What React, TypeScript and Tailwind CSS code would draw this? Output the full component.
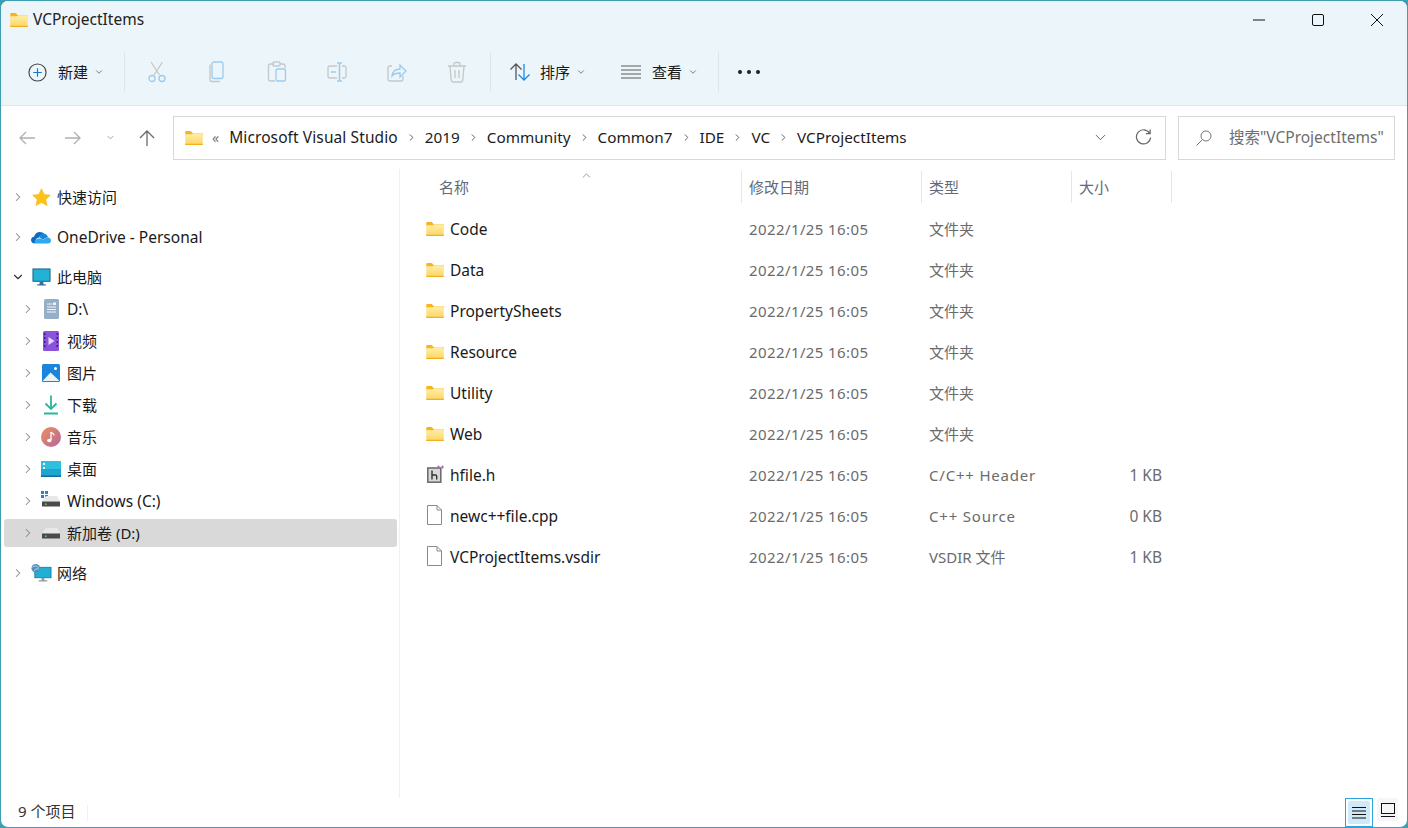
import { useId } from 'react';
import { ChevronDown, ChevronRight, ChevronUp } from 'lucide-react';

function Folder({ className = 'w-[18px] h-[14px]' }: { className?: string }) {
  const id = useId();
  return (
    <svg viewBox="0 0 20 16" className={className}>
      <defs>
        <linearGradient id={id} x1="0" y1="0" x2="0" y2="1">
          <stop offset="0" stopColor="#ffeeaa" />
          <stop offset="1" stopColor="#fcd562" />
        </linearGradient>
      </defs>
      <path d="M0 1.2C0 .5.5 0 1.2 0h5L8.5 2.2H20V5H0z" fill="#f6b51f" />
      <path d="M0 3.6h7.4L9 2.6h11V16H0z" fill={`url(#${id})`} />
      <rect x="0" y="14.6" width="20" height="1.4" fill="#efb021" />
    </svg>
  );
}

function Doc() {
  return (
    <svg viewBox="0 0 15 20" className="w-[15px] h-[20px] mb-[3px] mr-[1px]" fill="#fff" stroke="#8a8a8a">
      <path d="M.5.5h9.5l4.500 4.500v14.500H.5z" />
      <path d="M10 .5V5h4.500" fill="none" />
    </svg>
  );
}

function HeaderFile() {
  return (
    <svg viewBox="0 0 17 18" className="w-[17px] h-[18px] mb-[3px]">
      <rect x=".8" y="3" width="13" height="14.200" fill="#d9d9d9" stroke="#6e6e6e" strokeWidth="1.600" />
      <path d="M5 5.500v9M5 10h3.500q1.200 0 1.200 1.200v3.300" fill="none" stroke="#333" strokeWidth="1.400" />
      <path d="M10 2h3M11.500.5v3M14 2h3M15.500.5v3" stroke="#a866b0" strokeWidth="1" />
    </svg>
  );
}

const blue = '#9ccbef';
const grey = '#c3c8cb';

function ToolIcon({ children }: { children: React.ReactNode }) {
  return (
    <div className="w-[60px] flex justify-center">
      <svg viewBox="0 0 20 22" className="w-[20px] h-[22px]" fill="none" strokeWidth="1.3">
        {children}
      </svg>
    </div>
  );
}

function Drive({ win = false }: { win?: boolean }) {
  return (
    <svg viewBox="0 0 20 20" className="w-[20px] h-[20px]">
      {win && (
        <g fill="#1f86d6">
          <rect x="0" y="0" width="3" height="3" />
          <rect x="4" y="0" width="3" height="3" />
          <rect x="0" y="4" width="3" height="3" />
          <rect x="4" y="4" width="3" height="3" />
        </g>
      )}
      <path d="M5 5H16L19 10.500H1z" fill="#e8e8e8" />
      <rect x="1" y="10.500" width="18" height="5" fill="#4a4a4a" />
      <rect x="4" y="12.500" width="1.600" height="1.400" fill="#5fe05a" />
    </svg>
  );
}

const navIcons: Record<string, React.ReactNode> = {
  star: (
    <svg viewBox="0 0 20 20" className="w-[19px] h-[19px]">
      <path d="M10 .8l2.8 6 6.5.8-4.8 4.4 1.3 6.5L10 15.2l-5.800 3.300 1.300-6.500L.7 7.600l6.500-.8z" fill="#fcc419" stroke="#f4ae0c" strokeWidth=".6" />
    </svg>
  ),
  cloud: (
    <svg viewBox="0 0 20 14" className="w-[20px] h-[14px]">
      <path d="M3.600 13.500C1.600 13.500 0 12 0 10.100c0-1.800 1.300-3.200 3.100-3.400C3.800 3.900 6.100 2 8.800 2c1.900 0 3.500.9 4.600 2.300-1-.2-4.200.1-5.400 3.200-2 .2-3.800 1.800-3.600 4.200z" fill="#0c6cc4" />
      <path d="M8 7C9.500 3.500 13 2.500 15 4.500c1.200.8 1.700 1.500 2 2.900-1.100 0-3.400.3-5 2.700-1.100-.8-2.500-2.400-4-3.100z" fill="#1488dd" />
      <path d="M17 7.400c1.700.1 3 1.400 3 3 0 1.700-1.300 3.100-3 3.100H5c-1.400 0-1.800-2.600-.5-3.600 1.700-1.300 3.700-1.900 5.500-1.100 1 .4 1.500 1 2 1.500 1.300-1.900 3-2.900 5-2.900z" fill="#30a8ee" />
    </svg>
  ),
  pc: (
    <svg viewBox="0 0 20 20" className="w-[19px] h-[19px]">
      <rect x="1" y="1" width="18" height="13" fill="#22b2d6" stroke="#1a5f85" strokeWidth="1" />
      <path d="M8 14.500h4v2.500H8zM5.500 17h9v1.500h-9z" fill="#2f7396" />
    </svg>
  ),
  doc: (
    <svg viewBox="0 0 15 20" className="w-[15px] h-[20px]">
      <rect width="15" height="20" rx="1.500" fill="#96aec6" />
      <path d="M3 5h5M3 8h9M3 10.500h9M3 13h9" stroke="#f3f6f9" strokeWidth="1" />
      <rect x="9" y="3.500" width="3" height="2.500" fill="#f3f6f9" />
    </svg>
  ),
  video: (
    <svg viewBox="0 0 16 20" className="w-[16px] h-[20px]">
      <rect width="16" height="20" rx="1.500" fill="#8b53dc" />
      <path d="M1 2h1.500v2H1zM1 6h1.500v2H1zM1 10h1.500v2H1zM1 14h1.500v2H1zM13.500 2H15v2h-1.500zM13.500 6H15v2h-1.500zM13.500 10H15v2h-1.500zM13.500 14H15v2h-1.500z" fill="#3f2080" />
      <path d="M5.500 6l6 4-6 4z" fill="#e6d8fb" />
    </svg>
  ),
  image: (
    <svg viewBox="0 0 18 18" className="w-[18px] h-[18px]">
      <rect width="18" height="18" rx="1.500" fill="#1b84dd" />
      <circle cx="13.500" cy="4.500" r="1.500" fill="#fff" />
      <path d="M1 16.500L8.500 8.500 17 16.500V17H1z" fill="#e8f3fb" />
    </svg>
  ),
  down: (
    <svg viewBox="0 0 14 20" className="w-[14px] h-[20px]" fill="none" stroke="#28b89a" strokeWidth="1.800">
      <path d="M7 .5v13M1.500 8.500L7 14l5.500-5.500M0 18.500h14" />
    </svg>
  ),
  music: (
    <svg viewBox="0 0 20 20" className="w-[20px] h-[20px]">
      <defs>
        <linearGradient id="music-g" x1="0" y1="0" x2="1" y2="1">
          <stop offset="0" stopColor="#f0905a" />
          <stop offset="1" stopColor="#b4669f" />
        </linearGradient>
      </defs>
      <circle cx="10" cy="10" r="10" fill="url(#music-g)" />
      <path d="M10 5v8" stroke="#fff" strokeWidth="1.300" />
      <path d="M10 5c1 1.500 3 1.500 3 3.500" fill="none" stroke="#fff" strokeWidth="1.300" />
      <ellipse cx="8.300" cy="13.500" rx="2.200" ry="1.800" fill="#fff" />
    </svg>
  ),
  desktop: (
    <svg viewBox="0 0 20 16" className="w-[20px] h-[16px]">
      <rect width="20" height="16" rx="1" fill="#1ea5cd" />
      <rect width="20" height="8" rx="1" fill="#2ec0df" />
      <rect x="2" y="2" width="2" height="2" fill="#fff" />
      <rect x="2" y="6" width="2" height="2" fill="#fff" />
      <rect x="0" y="14.500" width="20" height="1.500" fill="#0f6c9c" />
    </svg>
  ),
  win: <Drive win />,
  drive: <Drive />,
  net: (
    <svg viewBox="0 0 22 20" className="w-[21px] h-[20px]">
      <rect x="4" y="4" width="17" height="11" fill="#22afd4" stroke="#1a6f95" strokeWidth=".8" />
      <path d="M11 15h3v2.500h-3zM8 17.500h9V19H8z" fill="#8d9aa3" />
      <circle cx="5" cy="5" r="4.500" fill="#4f8fb5" />
      <path d="M1.500 4c2-2 5-2 6.500 1M3 8c1-2 3-3 5-2" fill="none" stroke="#cfe3ee" strokeWidth=".9" />
    </svg>
  ),
};

const navItems = [
  { label: '快速访问', icon: 'star', level: 0, gap: 'mt-0' },
  { label: 'OneDrive - Personal', icon: 'cloud', level: 0, gap: 'mt-[12px]', latin: true },
  { label: '此电脑', icon: 'pc', level: 0, gap: 'mt-[12px]', open: true },
  { label: 'D:\\', icon: 'doc', level: 1, gap: 'mt-[4px]', latin: true },
  { label: '视频', icon: 'video', level: 1, gap: 'mt-[4px]' },
  { label: '图片', icon: 'image', level: 1, gap: 'mt-[4px]' },
  { label: '下载', icon: 'down', level: 1, gap: 'mt-[4px]' },
  { label: '音乐', icon: 'music', level: 1, gap: 'mt-[4px]' },
  { label: '桌面', icon: 'desktop', level: 1, gap: 'mt-[4px]' },
  { label: 'Windows (C:)', icon: 'win', level: 1, gap: 'mt-[4px]', latin: true },
  { label: '新加卷 (D:)', icon: 'drive', level: 1, gap: 'mt-[4px]', selected: true },
  { label: '网络', icon: 'net', level: 0, gap: 'mt-[12px]' },
];

const files = [
  { name: 'Code', type: '文件夹', size: '', icon: 'folder' },
  { name: 'Data', type: '文件夹', size: '', icon: 'folder' },
  { name: 'PropertySheets', type: '文件夹', size: '', icon: 'folder' },
  { name: 'Resource', type: '文件夹', size: '', icon: 'folder' },
  { name: 'Utility', type: '文件夹', size: '', icon: 'folder' },
  { name: 'Web', type: '文件夹', size: '', icon: 'folder' },
  { name: 'hfile.h', type: 'C/C++ Header', size: '1 KB', icon: 'h', wide: true },
  { name: 'newc++file.cpp', type: 'C++ Source', size: '0 KB', icon: 'doc', wide: true },
  { name: 'VCProjectItems.vsdir', type: 'VSDIR 文件', size: '1 KB', icon: 'doc' },
];

const crumbs = ['Microsoft Visual Studio', '2019', 'Community', 'Common7', 'IDE', 'VC', 'VCProjectItems'];

const columns = [
  { label: '修改日期', w: 'w-[180px]' },
  { label: '类型', w: 'w-[150px]' },
  { label: '大小', w: 'w-[100px]' },
];

export default function App() {
  return (
    <div className="w-[1408px] h-[828px] bg-[#3f9db2] p-px overflow-hidden font-['Noto_Sans','Noto_Sans_CJK_SC',sans-serif] text-[15px] text-[#1a1a1a]">
      <div className="h-full flex flex-col rounded-[7px] overflow-hidden bg-white">
        {/* title bar + toolbar */}
        <div className="h-[105px] shrink-0 bg-[#ecf5f9] border-b border-[#dfe4e7]">
          <div className="h-[37px] flex items-center pl-[9px]">
            <Folder />
            <span className="ml-[5px] text-[15.5px] text-[#222]">VCProjectItems</span>
            <div className="ml-auto flex items-center">
              <svg viewBox="0 0 12 12" className="w-[12px] h-[12px] mr-[47px]" stroke="#111" fill="none"><path d="M0 6h12" /></svg>
              <svg viewBox="0 0 12 12" className="w-[12px] h-[12px] mr-[47px]" stroke="#111" fill="none"><rect x=".5" y=".5" width="11" height="11" rx="1.500" /></svg>
              <svg viewBox="0 0 12 12" className="w-[12px] h-[12px] mr-[24px]" stroke="#111" fill="none"><path d="M0 0l12 12M12 0L0 12" /></svg>
            </div>
          </div>
          <div className="h-[67px] pt-[1px] flex items-center">
            <div className="w-[123px] flex items-center pl-[27px]">
              <svg viewBox="0 0 20 20" className="w-[19px] h-[19px]" fill="none">
                <circle cx="10" cy="10" r="9" stroke="#444" strokeWidth="1.200" />
                <path d="M10 5.500v9M5.500 10h9" stroke="#1177cc" strokeWidth="1.200" />
              </svg>
              <span className="ml-[11px]">新建</span>
              <ChevronDown size={10} className="ml-[6px] text-[#666]" />
            </div>
            <div className="w-px h-[40px] bg-[#dfe4e7]" />
            <div className="flex ml-[2px]">
              <ToolIcon>
                <path d="M4 1l8.500 13M15.500 1L7 14" stroke={grey} />
                <circle cx="5" cy="17.500" r="3" stroke={blue} />
                <circle cx="15" cy="17.500" r="3" stroke={blue} />
              </ToolIcon>
              <ToolIcon>
                <path d="M3 3.500v15q0 2 2 2h8" stroke={grey} />
                <rect x="5" y="1" width="11" height="16.500" rx="2" stroke={blue} />
              </ToolIcon>
              <ToolIcon>
                <path d="M7 3H3.500q-2 0-2 2v13q0 2 2 2H8" stroke={grey} />
                <path d="M13 3h3q2 0 2 2v2" stroke={grey} />
                <rect x="6" y="1" width="7" height="4" rx="1" stroke={grey} />
                <rect x="9" y="8" width="9.500" height="12" rx="2" stroke={blue} />
              </ToolIcon>
              <ToolIcon>
                <path d="M10 5H3q-2 0-2 2v8q0 2 2 2h7M15 5h2.500q1.500 0 1.500 2v8q0 2-1.500 2H15" stroke={grey} />
                <path d="M10 2h5M10 20h5M12.500 2v18M4 11h5" stroke={blue} strokeWidth="1.500" />
              </ToolIcon>
              <ToolIcon>
                <path d="M5 5H3q-2 0-2 2v11q0 2 2 2h11q2 0 2-2v-3" stroke={grey} />
                <path d="M5 15q1-7 8-7V4l6 6-6 6v-4q-5 0-8 3z" stroke={blue} />
              </ToolIcon>
              <ToolIcon>
                <path d="M1 5h18M7 5V3q0-1.500 1.500-1.500h3Q13 1.500 13 3v2M3 5l1.200 14q.2 2 2 2h7.600q1.800 0 2-2L17 5M8 9v8M12 9v8" stroke={grey} />
              </ToolIcon>
            </div>
            <div className="ml-[3px] w-px h-[40px] bg-[#dfe4e7]" />
            <div className="w-[101px] flex items-center pl-[19px]">
              <svg viewBox="0 0 20 18" className="w-[20px] h-[18px]" fill="none" strokeWidth="1.300">
                <path d="M6 17V1M.5 6.500L6 1l5.500 5.500" stroke="#555" />
                <path d="M14 1v16M8.500 11.500L14 17l5.500-5.500" stroke="#1b8ae4" />
              </svg>
              <span className="ml-[10px]">排序</span>
              <ChevronDown size={10} className="ml-[6px] text-[#666]" />
            </div>
            <div className="w-[126px] flex items-center pl-[29px]">
              <svg viewBox="0 0 20 14" className="w-[20px] h-[14px]" stroke="#5a5a5a" strokeWidth="1.200" fill="none">
                <path d="M0 1h20M0 5h20M0 9h20M0 13h20" />
              </svg>
              <span className="ml-[11px]">查看</span>
              <ChevronDown size={10} className="ml-[6px] text-[#666]" />
            </div>
            <div className="w-px h-[40px] bg-[#dfe4e7]" />
            <div className="ml-[19px] flex gap-[5px]">
              <div className="w-[4px] h-[4px] rounded-full bg-[#222]" />
              <div className="w-[4px] h-[4px] rounded-full bg-[#222]" />
              <div className="w-[4px] h-[4px] rounded-full bg-[#222]" />
            </div>
          </div>
        </div>

        {/* address row */}
        <div className="h-[63px] shrink-0 flex items-center">
          <div className="w-[172px] flex items-center pl-[18px]">
            <svg viewBox="0 0 16 14" className="w-[16px] h-[14px]" stroke="#b0b0b0" strokeWidth="1.300" fill="none"><path d="M16 7H1M7 1L1 7l6 6" /></svg>
            <svg viewBox="0 0 16 14" className="ml-[30px] w-[16px] h-[14px]" stroke="#b0b0b0" strokeWidth="1.300" fill="none"><path d="M0 7h15M9 1l6 6-6 6" /></svg>
            <ChevronDown size={11} className="ml-[24px] text-[#a0a0a0]" />
            <svg viewBox="0 0 16 16" className="ml-[23px] w-[16px] h-[16px]" stroke="#6a6a6a" strokeWidth="1.300" fill="none"><path d="M8 16V1M1 8l7-7 7 7" /></svg>
          </div>
          <div className="w-[993px] h-[44px] border border-[#d8d8d8] flex items-center pl-[11px] text-[#1c1c1c]">
            <Folder />
            <span className="ml-[9px] text-[#777] text-[14px] leading-none">«</span>
            <div className="flex items-center text-[15.3px]">
              {crumbs.map((c, i) => (
                <div key={c} className="flex items-center">
                  {i > 0 && <ChevronRight size={11} className="mx-[8px] text-[#555]" />}
                  <span className={i === 0 ? 'ml-[10px] text-[15.5px] tracking-[.1px]' : ''}>{c}</span>
                </div>
              ))}
            </div>
            <ChevronDown size={17} strokeWidth={1.300} className="ml-auto text-[#555]" />
            <svg viewBox="0 0 18 18" className="ml-[26px] mr-[13px] w-[17px] h-[17px]" stroke="#666" strokeWidth="1.300" fill="none">
              <path d="M15.500 4.500A7.500 7.500 0 1 0 16.500 9M16 .5v4.500h-4.500" />
            </svg>
          </div>
          <div className="ml-[12px] w-[217px] h-[44px] border border-[#d8d8d8] flex items-center pl-[17px]">
            <svg viewBox="0 0 16 16" className="w-[16px] h-[16px]" stroke="#777" strokeWidth="1" fill="none">
              <circle cx="10" cy="6" r="5" /><path d="M6.500 9.500L.5 15.500" />
            </svg>
            <span className="ml-[17px] text-[#6e6e6e] text-[15.5px] whitespace-nowrap">搜索"VCProjectItems"</span>
          </div>
        </div>

        {/* main */}
        <div className="flex-1 flex min-h-0">
          <nav className="w-[399px] shrink-0 border-r border-[#f0f0f0] pt-[14px] pl-[3px] pr-[2px]">
            {navItems.map((item) => (
              <div
                key={item.label}
                className={`h-[28px] flex items-center rounded-[3px] ${item.gap} ${item.selected ? 'bg-[#d9d9d9]' : ''}`}
              >
                <div className={`flex items-center shrink-0 ${item.level ? 'w-[63px] pl-[17px]' : 'w-[53px] pl-[7px]'}`}>
                  {item.open ? (
                    <ChevronDown size={14} strokeWidth={2} className="text-[#333]" />
                  ) : (
                    <ChevronRight size={14} strokeWidth={1.800} className="text-[#8a8a8a]" />
                  )}
                  <div className="ml-[5px] w-[22px] flex justify-center">{navIcons[item.icon]}</div>
                </div>
                <span className={`whitespace-nowrap ${item.latin ? 'text-[15.5px] pt-[1px]' : ''}`}>{item.label}</span>
              </div>
            ))}
          </nav>

          <main className="flex-1 relative">
            <ChevronUp size={13} strokeWidth={1.200} className="absolute left-[180px] top-0 text-[#666]" />
            <div className="h-[40px] flex pt-[2px] text-[#5f6b78]">
              <div className="w-[342px] h-[32px] pl-[39px] flex items-center border-r border-[#e6e6e6]">名称</div>
              {columns.map((col) => (
                <div key={col.label} className={`${col.w} h-[32px] pl-[7px] flex items-center border-r border-[#e6e6e6]`}>{col.label}</div>
              ))}
            </div>
            {files.map((f) => (
              <div key={f.name} className="h-[41px] flex items-center">
                <div className="w-[342px] flex items-center pl-[26px]">
                  <div className="w-[18px] flex justify-center">
                    {f.icon === 'folder' ? (
                      <Folder className="w-[18px] h-[14px] mb-[2px]" />
                    ) : f.icon === 'h' ? (
                      <HeaderFile />
                    ) : (
                      <Doc />
                    )}
                  </div>
                  <span className="ml-[6px] text-[15.5px]">{f.name}</span>
                </div>
                <div className="w-[180px] pl-[7px] text-[#6b6b6b] tracking-[.4px]">2022/1/25 16:05</div>
                <div className={`w-[150px] pl-[7px] text-[#6b6b6b] ${f.wide ? 'tracking-[.8px]' : ''}`}>{f.type}</div>
                <div className="w-[90px] text-right text-[#6b6b6b] text-[15.5px]">{f.size}</div>
              </div>
            ))}
          </main>
        </div>

        {/* status bar */}
        <div className="h-[29px] shrink-0 flex items-center pl-[17px] text-[#333]">
          <span className="mb-[2px]">9 个项目</span>
          <div className="ml-[12px] w-px h-[16px] bg-[#f0f0f0]" />
          <div className="ml-auto flex items-center mr-[9px] gap-[4px]">
            <div className="w-[28px] h-[29px] border border-[#2aa5de] p-[2px]">
              <div className="h-full bg-[#cfe9f8] rounded-[2px] flex items-center justify-center">
                <svg viewBox="0 0 14 12" className="w-[14px] h-[12px]" stroke="#111" strokeWidth="1" fill="none"><path d="M0 .5h14M0 4h14M0 7.500h14M0 11h14" /></svg>
              </div>
            </div>
            <div className="w-[21px] h-[23px] mb-[6px] bg-[#f6f6f6] rounded-[3px] flex items-center justify-center">
              <svg viewBox="0 0 14 14" className="w-[14px] h-[14px]" stroke="#111" strokeWidth="1" fill="none"><rect x=".5" y=".5" width="13" height="10" /><path d="M0 13.500h14" /></svg>
            </div>
          </div>
        </div>
      </div>
    </div>
  );
}
